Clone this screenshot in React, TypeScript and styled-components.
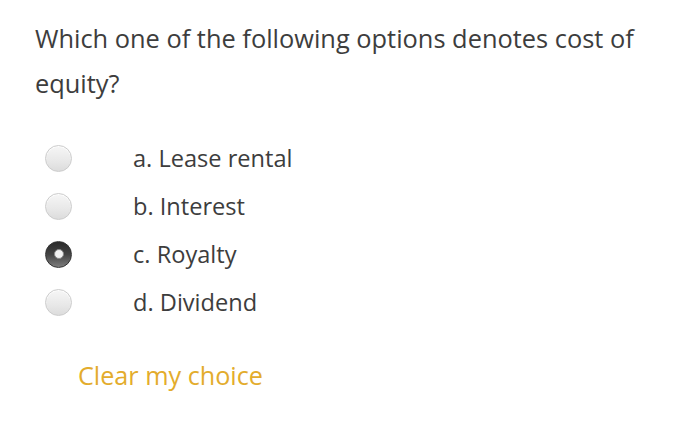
import styled, { createGlobalStyle } from "styled-components";

const GlobalStyle = createGlobalStyle`
  html, body {
    margin: 0;
    padding: 0;
    background: #ffffff;
  }
  body {
    font-family: "Open Sans", "Liberation Sans", sans-serif;
    color: #3f3f3f;
  }
`;

const Page = styled.div`
  width: 700px;
  height: 436px;
  box-sizing: border-box;
  padding: 16px 30px 0 35px;
`;

const Question = styled.div`
  font-size: 25.4px;
  line-height: 45px;
  color: #3d3d3d;
`;

const Options = styled.div`
  margin-top: 28px;
  display: flex;
  flex-direction: column;
`;

const Option = styled.label`
  display: flex;
  align-items: center;
  height: 48px;
`;

const Radio = styled.span<{ $checked?: boolean }>`
  box-sizing: border-box;
  width: 27px;
  height: 27px;
  margin-left: 10px;
  border-radius: 50%;
  flex: none;
  display: flex;
  align-items: center;
  justify-content: center;
  border: 1px solid ${(p) => (p.$checked ? "#333333" : "#cccccc")};
  background: ${(p) =>
    p.$checked
      ? "linear-gradient(to bottom, #2a2a2a 0%, #444444 50%, #7d7d7d 100%)"
      : "linear-gradient(to bottom, #f6f6f6 0%, #e8e8e8 60%, #dcdcdc 100%)"};
  box-shadow: ${(p) =>
    p.$checked ? "none" : "inset 0 1px 1px rgba(255,255,255,0.9)"};

  &::after {
    content: "";
    display: ${(p) => (p.$checked ? "block" : "none")};
    box-sizing: border-box;
    width: 10px;
    height: 10px;
    border-radius: 50%;
    border: 1px solid #8a8a8a;
    background: #f2f2f2;
  }
`;

const OptionText = styled.span`
  margin-left: 61px;
  font-size: 23.6px;
  color: #3d3d3d;
`;

const ClearLink = styled.a`
  display: inline-block;
  margin-top: 32px;
  margin-left: 43px;
  font-size: 25.2px;
  color: #e3ac2c;
  text-decoration: none;
  cursor: pointer;
`;

const choices = [
  { id: "a", label: "a. Lease rental" },
  { id: "b", label: "b. Interest" },
  { id: "c", label: "c. Royalty" },
  { id: "d", label: "d. Dividend" },
];

export default function App() {
  const selected = "c";
  return (
    <>
      <GlobalStyle />
      <Page>
        <Question>
          Which one of the following options denotes cost of equity?
        </Question>
        <Options>
          {choices.map((c) => (
            <Option key={c.id}>
              <Radio $checked={c.id === selected} />
              <OptionText>{c.label}</OptionText>
            </Option>
          ))}
        </Options>
        <ClearLink>Clear my choice</ClearLink>
      </Page>
    </>
  );
}
